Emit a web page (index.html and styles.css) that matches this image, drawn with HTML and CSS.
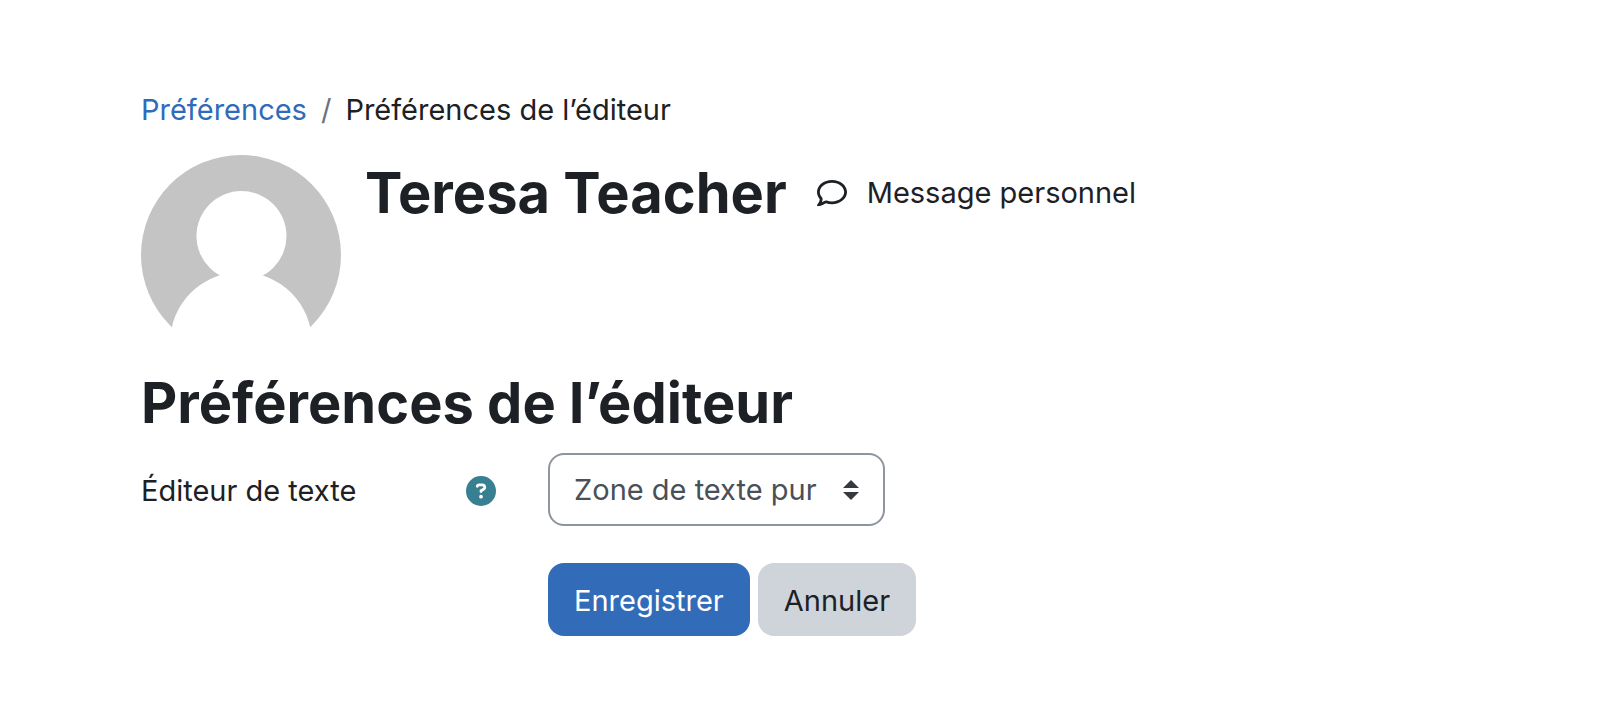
FILE: index.html
```html
<!DOCTYPE html>
<html lang="fr">
<head>
<meta charset="utf-8">
<title>Préférences de l’éditeur</title>
<link rel="stylesheet" href="styles.css">
</head>
<body>
<div class="page">
  <nav class="breadcrumb" aria-label="Fil d’Ariane">
    <a class="breadcrumb-link" href="#">Préférences</a>
    <span class="breadcrumb-separator">/</span>
    <span>Préférences de l’éditeur</span>
  </nav>
  <header class="profile">
    <svg class="avatar" viewBox="0 0 200 200" aria-hidden="true">
      <circle cx="100" cy="100" r="100" fill="#c4c4c4"/>
      <circle cx="100" cy="188" r="71" fill="#fff"/>
      <circle cx="100.500" cy="81" r="45" fill="#fff"/>
    </svg>
    <div class="profile-line">
      <h1 class="title">Teresa Teacher</h1>
      <a class="message-link" href="#">
        <svg class="icon" viewBox="0 0 512 512" fill="currentColor" aria-hidden="true"><path d="M123.6 391.3c12.9-9.4 29.6-11.8 44.6-6.4c26.5 9.6 56.2 15.1 87.8 15.1c124.7 0 208-80.5 208-160s-83.3-160-208-160S48 160.5 48 240c0 32 12.4 62.8 35.7 89.2c8.6 9.7 12.8 22.5 11.8 35.5c-1.4 18.1-5.7 34.7-11.3 49.4c17-7.9 31.1-16.7 39.4-22.7zM21.2 431.9c1.8-2.7 3.5-5.4 5.1-8.1c10-16.6 19.5-38.4 21.4-62.9C17.7 326.8 0 285.1 0 240C0 125.1 114.6 32 256 32s256 93.1 256 208s-114.6 208-256 208c-37.1 0-72.3-6.4-104.1-17.9c-11.9 8.7-31.3 20.6-54.3 30.6c-15.1 6.6-32.3 12.6-50.1 16.1c-.8 .2-1.6 .3-2.4 .5c-4.4 .8-8.7 1.5-13.2 1.9c-.2 0-.5 .1-.7 .1c-5.1 .5-10.2 .8-15.3 .8c-6.5 0-12.3-3.9-14.8-9.9c-2.5-6-1.1-12.8 3.4-17.4c4.1-4.2 7.8-8.7 11.3-13.5c1.7-2.3 3.3-4.6 4.8-6.9c.1-.2 .2-.3 .3-.5z"/></svg>
        <span>Message personnel</span>
      </a>
    </div>
  </header>
  <main>
    <h2 class="title">Préférences de l’éditeur</h2>
    <form class="form">
      <div class="label-cell">
        <label for="editor">Éditeur de texte</label>
        <button class="help" type="button" aria-label="Aide">
          <svg class="icon" viewBox="0 0 512 512" fill="currentColor" aria-hidden="true"><path d="M256 512A256 256 0 1 0 256 0a256 256 0 1 0 0 512zM169.8 165.3c7.9-22.3 29.1-37.3 52.8-37.3h58.3c34.9 0 63.1 28.3 63.1 63.1c0 22.6-12.1 43.5-31.7 54.8L280 264.4c-.2 13-10.9 23.6-24 23.6c-13.3 0-24-10.7-24-24V250.5c0-8.6 4.6-16.5 12.1-20.8l44.3-25.4c4.7-2.7 7.6-7.7 7.6-13.1c0-8.4-6.8-15.1-15.1-15.1H222.6c-3.4 0-6.4 2.1-7.5 5.3l-.4 1.2c-4.4 12.5-18.2 19-30.6 14.6s-19-18.2-14.6-30.6l.4-1.2zM224 352a32 32 0 1 1 64 0 32 32 0 1 1-64 0z"/></svg>
        </button>
      </div>
      <div class="field">
        <select class="select" id="editor"><option>Zone de texte pur</option></select>
      </div>
      <div class="actions">
        <button class="button button-primary" type="submit">Enregistrer</button>
        <button class="button button-secondary" type="button">Annuler</button>
      </div>
    </form>
  </main>
</div>
</body>
</html>
```
FILE: styles.css
```css
* {
  box-sizing: border-box;
}

body {
  margin: 0;
  background: #fff;
  color: #1d2125;
  font-family: Inter, "Liberation Sans", sans-serif;
  font-size: 29px;
  line-height: 44px;
}

.page {
  padding: 88px 141px 76px;
}

.breadcrumb {
  display: flex;
  gap: 14px;
}

.breadcrumb-link {
  color: #2f6bba;
  text-decoration: none;
}

.breadcrumb-separator {
  color: #6a737b;
}

.profile {
  display: flex;
  gap: 24px;
  margin-top: 23px;
}

.avatar {
  flex: none;
  width: 200px;
  height: 200px;
}

.profile-line {
  display: flex;
  align-items: center;
  align-self: flex-start;
  gap: 30px;
  padding-top: 2px;
}

.title {
  margin: 0;
  font-size: 56px;
  font-weight: 700;
  line-height: 72px;
}

.message-link {
  display: flex;
  align-items: center;
  gap: 20px;
  color: inherit;
  text-decoration: none;
}

.icon {
  display: block;
  flex: none;
  width: 30px;
  height: 30px;
}

main {
  padding-top: 12px;
}

.form {
  display: grid;
  grid-template-columns: 355px 1fr;
  gap: 37px 52px;
  margin-top: 14px;
}

.label-cell {
  display: flex;
  align-items: center;
  justify-content: space-between;
  padding-top: 3px;
}

.help {
  padding: 0;
  border: 0;
  background: none;
  color: #387f92;
}

.select {
  display: block;
  height: 73px;
  padding: 0 66px 0 24px;
  border: 2px solid #8f959e;
  border-radius: 16px;
  appearance: none;
  background: #fff url("data:image/svg+xml,%3Csvg xmlns='http://www.w3.org/2000/svg' viewBox='0 0 4 5'%3E%3Cpath fill='%23343a40' d='M2 0L0 2h4zm0 5L0 3h4z'/%3E%3C/svg%3E") no-repeat right 24px center / 16px 20px;
  color: #495057;
  font: inherit;
}

.actions {
  display: flex;
  grid-column: 2;
  gap: 8px;
}

.button {
  height: 73px;
  padding: 2px 26px 0;
  border: 0;
  border-radius: 16px;
  font: inherit;
}

.button-primary {
  background: #326cb9;
  color: #fff;
}

.button-secondary {
  background: #ced4da;
  color: #1d2125;
}
```
